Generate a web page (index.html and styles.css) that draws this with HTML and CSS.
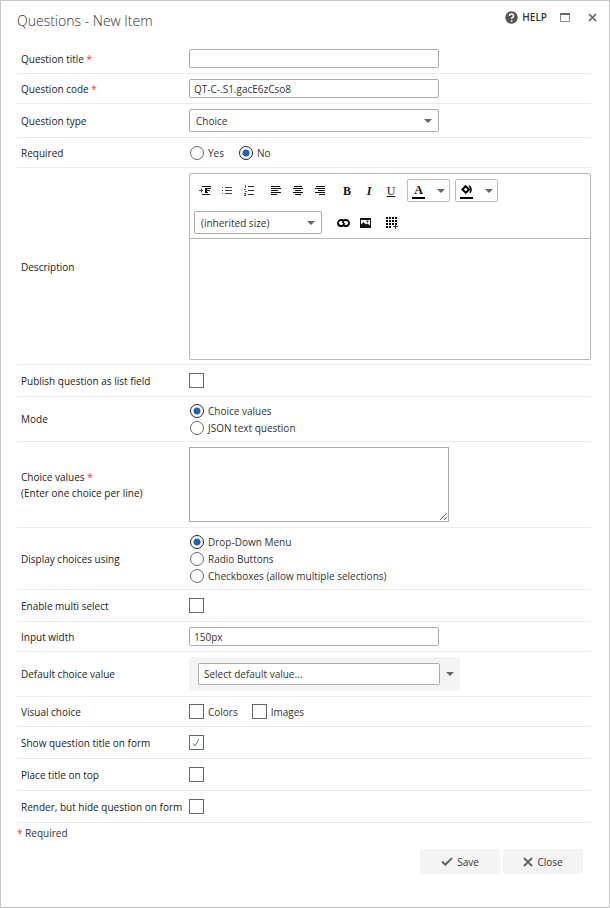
FILE: index.html
```html
<!DOCTYPE html>
<html lang="en">
<head>
    <meta charset="UTF-8">
    <meta name="viewport" content="width=device-width, initial-scale=1.0">
    <title>Questions - New Item</title>
    <link rel="stylesheet" href="styles.css">
</head>
<body>
    <div class="dialog">
        <div class="header">
            <h1>Questions - New Item</h1>
            <div class="header-buttons">
                <button type="button" class="help">
                    <svg width="13" height="13" viewBox="0 0 13 13"><circle cx="6.5" cy="6.5" r="6.2" fill="#555"/><path d="M4.4 5.1C4.4 2.4 8.7 2.5 8.6 5 8.5 6.5 6.6 6.4 6.6 8M6.6 9.2v1.5" fill="none" stroke="#fff" stroke-width="1.5"/></svg>
                    HELP
                </button>
                <button type="button" aria-label="Maximize">
                    <svg width="10" height="9" viewBox="0 0 10 9"><path d="M.5.5h9v8h-9z" fill="none" stroke="#888"/><path d="M0 0h10v2H0z" fill="#666"/></svg>
                </button>
                <button type="button" aria-label="Close dialog">
                    <svg width="9" height="9" viewBox="0 0 9 9"><path d="M1 1l7 7M8 1L1 8" stroke="#666" stroke-width="1.7"/></svg>
                </button>
            </div>
        </div>

        <form>
            <div class="row">
                <label class="name" for="title">Question title <span class="star">*</span></label>
                <div class="field"><input type="text" id="title"></div>
            </div>
            <div class="row">
                <label class="name" for="code">Question code <span class="star">*</span></label>
                <div class="field"><input type="text" id="code" value="QT-C-.S1.gacE6zCso8"></div>
            </div>
            <div class="row">
                <label class="name" for="type">Question type</label>
                <div class="field"><select id="type" class="type"><option>Choice</option></select></div>
            </div>
            <div class="row" role="radiogroup" aria-labelledby="required-name">
                <span class="name" id="required-name">Required</span>
                <div class="field inline">
                    <label class="option"><input type="radio" name="required">Yes</label>
                    <label class="option"><input type="radio" name="required" checked>No</label>
                </div>
            </div>
            <div class="row editor-row">
                <label class="name" for="description">Description</label>
                <div class="field">
                    <div class="editor">
                        <div class="toolbar">
                            <div class="tools">
                                <div class="group">
                                    <button type="button" aria-label="Indent"><svg width="12" height="9" viewBox="0 0 12 9"><path d="M3 .5h9M6 2.5h6M6 4.5h5M6 6.5h3M3 8.5h8" stroke="#111"/><path d="M6 2h2v5H6z" fill="#111"/><path d="M0 4.5h4M2.5 2.5v4" stroke="#444"/></svg></button>
                                    <button type="button" aria-label="Bulleted list"><svg width="10" height="9" viewBox="0 0 10 9"><path d="M3 1.5h7M3 4.5h7M3 7.5h7" stroke="#444"/><path d="M0 1.5h1M0 4.5h1M0 7.5h1" stroke="#444"/></svg></button>
                                    <button type="button" aria-label="Numbered list"><svg width="10" height="11" viewBox="0 0 10 11"><path d="M4 1.5h6M4 5.5h6M4 9.5h6" stroke="#333"/><path d="M1.5 0v3M0 4.5h2M1 6.5h2M0 8.5h2M0 10.5h2M1.5 8v3" stroke="#444" stroke-width=".9"/></svg></button>
                                </div>
                                <div class="group">
                                    <button type="button" aria-label="Align left"><svg width="10" height="9" viewBox="0 0 10 9"><path d="M0 .5h9M0 2.5h10M0 4.5h7M0 6.5h10M0 8.5h6" stroke="#111"/></svg></button>
                                    <button type="button" aria-label="Align center"><svg width="10" height="9" viewBox="0 0 10 9"><path d="M1 .5h8M0 2.5h10M2 4.5h6M0 6.5h10M2 8.5h6" stroke="#111"/></svg></button>
                                    <button type="button" aria-label="Align right"><svg width="10" height="9" viewBox="0 0 10 9"><path d="M1 .5h9M0 2.5h10M3 4.5h7M0 6.5h10M4 8.5h6" stroke="#111"/></svg></button>
                                </div>
                                <div class="group letters">
                                    <button type="button" class="bold">B</button>
                                    <button type="button" class="italic">I</button>
                                    <button type="button" class="underline">U</button>
                                </div>
                                <button type="button" class="color" aria-label="Text color">
                                    <span class="swatch">A</span>
                                    <svg width="8" height="4" viewBox="0 0 8 4"><path d="M0 0h8L4 4z" fill="#666"/></svg>
                                </button>
                                <button type="button" class="color" aria-label="Background color">
                                    <span class="swatch"><svg width="11" height="9" viewBox="0 0 11 9"><path d="M4.5 1.2L1.4 4.5l3.4 3.2 3.3-3.2z" fill="none" stroke="#000" stroke-width="2"/><path d="M8 .8c2.600 1.700 2.600 5 .8 7" fill="none" stroke="#000" stroke-width="1.6"/></svg></span>
                                    <svg width="8" height="4" viewBox="0 0 8 4"><path d="M0 0h8L4 4z" fill="#666"/></svg>
                                </button>
                            </div>
                            <div class="tools">
                                <select class="size" aria-label="Font size"><option>(inherited size)</option></select>
                                <div class="group inserts">
                                    <button type="button" aria-label="Insert link"><svg width="13" height="8" viewBox="0 0 13 8"><path d="M6 1H4a3 3 0 0 0 0 6h1c2 0 2-2 2-3M7 7h2a3 3 0 0 0 0-6H8C6 1 6 3 6 4" fill="none" stroke="#000" stroke-width="1.8"/></svg></button>
                                    <button type="button" aria-label="Insert image"><svg width="11" height="10" viewBox="0 0 11 10"><path d="M0 0h11v10H0z" fill="#111"/><path d="M1 6.5L3.500 4 6 6.5l1.500-1L10 7.500V2H1z" fill="#fff"/><circle cx="7.5" cy="3.5" r="1" fill="#111"/></svg></button>
                                </div>
                                <div class="group">
                                    <button type="button" aria-label="Insert table"><svg width="12" height="12" viewBox="0 0 12 12"><path d="M0 1h11M0 4h11M0 7h11M0 10h6" stroke="#000" stroke-width="2" stroke-dasharray="2 1"/><path d="M7 9.5h5M9.500 7v5" stroke="#333"/></svg></button>
                                </div>
                            </div>
                        </div>
                        <textarea id="description" class="editor-text"></textarea>
                    </div>
                </div>
            </div>
            <div class="row">
                <label class="name" for="publish">Publish question as list field</label>
                <div class="field tick"><input type="checkbox" id="publish"></div>
            </div>
            <div class="row" role="radiogroup" aria-labelledby="mode-name">
                <span class="name" id="mode-name">Mode</span>
                <div class="field">
                    <label class="option"><input type="radio" name="mode" checked>Choice values</label>
                    <label class="option"><input type="radio" name="mode">JSON text question</label>
                </div>
            </div>
            <div class="row">
                <label class="name" for="values">Choice values <span class="star">*</span><br>(Enter one choice per line)</label>
                <div class="field"><textarea id="values" class="values"></textarea></div>
            </div>
            <div class="row" role="radiogroup" aria-labelledby="display-name">
                <span class="name" id="display-name">Display choices using</span>
                <div class="field">
                    <label class="option"><input type="radio" name="display" checked>Drop-Down Menu</label>
                    <label class="option"><input type="radio" name="display">Radio Buttons</label>
                    <label class="option"><input type="radio" name="display">Checkboxes (allow multiple selections)</label>
                </div>
            </div>
            <div class="row">
                <label class="name" for="multi">Enable multi select</label>
                <div class="field tick"><input type="checkbox" id="multi"></div>
            </div>
            <div class="row">
                <label class="name" for="width">Input width</label>
                <div class="field"><input type="text" id="width" value="150px"></div>
            </div>
            <div class="row">
                <label class="name" for="default">Default choice value</label>
                <div class="field">
                    <div class="combo">
                        <input type="text" id="default" value="Select default value...">
                        <button type="button" aria-label="Open list"><svg width="8" height="4" viewBox="0 0 8 4"><path d="M0 0h8L4 4z" fill="#666"/></svg></button>
                    </div>
                </div>
            </div>
            <div class="row" role="group" aria-labelledby="visual-name">
                <span class="name" id="visual-name">Visual choice</span>
                <div class="field inline">
                    <label class="option"><input type="checkbox">Colors</label>
                    <label class="option"><input type="checkbox">Images</label>
                </div>
            </div>
            <div class="row">
                <label class="name" for="show">Show question title on form</label>
                <div class="field tick"><input type="checkbox" id="show" checked></div>
            </div>
            <div class="row">
                <label class="name" for="top">Place title on top</label>
                <div class="field tick"><input type="checkbox" id="top"></div>
            </div>
            <div class="row">
                <label class="name" for="hide">Render, but hide question on form</label>
                <div class="field tick"><input type="checkbox" id="hide"></div>
            </div>

            <p class="note"><span class="star">*</span> Required</p>

            <div class="actions">
                <button type="submit">
                    <svg width="12" height="9" viewBox="0 0 12 9"><path d="M1 4.5l3.300 3.300L11 1" fill="none" stroke="#666" stroke-width="2"/></svg>
                    Save
                </button>
                <button type="button">
                    <svg width="10" height="10" viewBox="0 0 10 10"><path d="M1 1l8 8M9 1L1 9" stroke="#666" stroke-width="2"/></svg>
                    Close
                </button>
            </div>
        </form>
    </div>
</body>
</html>
```
FILE: styles.css
```css
* {
    box-sizing: border-box;
}

body {
    margin: 0;
    background-color: #fff;
    color: #333;
    font-family: "Open Sans", "Noto Sans", sans-serif;
    font-size: 10px;
    line-height: 16px;
}

input, select, textarea, button {
    margin: 0;
    font: inherit;
    color: inherit;
}

button {
    display: inline-flex;
    align-items: center;
    justify-content: center;
    padding: 0;
    border: 0;
    background: none;
    cursor: pointer;
}

.dialog {
    min-height: 100vh;
    padding: 0 18px 16px 16px;
    border: 1px solid #c6c6c6;
}

.header {
    display: flex;
    justify-content: space-between;
    height: 43px;
}

h1 {
    margin: 9px 0 0;
    font-size: 14px;
    font-weight: 300;
    line-height: 22px;
    color: #333;
}

.header-buttons {
    display: flex;
    align-items: center;
    gap: 13px;
    height: 16px;
    margin-top: 8px;
    margin-right: -6px;
}

.header-buttons button:last-child {
    margin-left: 5px;
}

.help {
    gap: 4px;
    font-size: 10px;
    font-weight: 600;
}

/* form rows */

.row {
    display: grid;
    grid-template-columns: 172px 1fr;
    align-items: center;
    padding: 5px 0;
    border-bottom: 1px solid #ececec;
}

.name {
    padding-left: 4px;
    color: #222;
    white-space: nowrap;
}

.star {
    color: #f33;
}

.field {
    min-width: 0;
}

.field > input[type="text"],
.type {
    display: block;
    width: 250px;
    height: 19px;
    padding: 0 4px;
    border: 1px solid #ababab;
    border-radius: 2px;
    background-color: #fff;
}

select {
    appearance: none;
    border: 1px solid #ababab;
    border-radius: 2px;
    background: #fff url("data:image/svg+xml,%3Csvg xmlns='http://www.w3.org/2000/svg' width='8' height='4'%3E%3Cpath d='M0 0h8L4 4z' fill='%23666'/%3E%3C/svg%3E") no-repeat right 6px center;
}

.field > .type {
    height: 23px;
    padding: 0 6px;
}

.inline {
    display: flex;
    align-items: center;
    gap: 14px;
    min-height: 19px;
}

.tick {
    display: flex;
    align-items: center;
    min-height: 21px;
}

.option {
    display: flex;
    align-items: center;
    gap: 4px;
    height: 17px;
}

input[type="radio"],
input[type="checkbox"] {
    appearance: none;
    flex: none;
    width: 15px;
    height: 15px;
    border: 1px solid #666;
    background-color: #fff;
}

input[type="radio"] {
    width: 14px;
    height: 14px;
    margin-left: 1px;
    border-radius: 50%;
}

input[type="radio"]:checked {
    border-color: #222;
    background: radial-gradient(circle, #2561b8 3px, #fff 4px);
}

input[type="checkbox"]:checked {
    background: #fff url("data:image/svg+xml,%3Csvg xmlns='http://www.w3.org/2000/svg' width='9' height='9'%3E%3Cpath d='M1 5.5l2 2.5L7 1' fill='none' stroke='%235a7fa0'/%3E%3C/svg%3E") no-repeat center;
}

/* rich text editor */

.editor-row {
    padding-bottom: 4px;
}

.editor {
    border: 1px solid #b5b5b5;
    border-radius: 2px;
}

.toolbar {
    padding: 5px 4px 4px;
    border-bottom: 1px solid #b5b5b5;
}

.tools {
    display: flex;
    align-items: center;
    gap: 5px;
    height: 23px;
}

.tools + .tools {
    margin-top: 9px;
}

.group {
    display: flex;
}

.group button {
    width: 22px;
    height: 22px;
}

.letters {
    font-family: "Liberation Serif", serif;
    font-size: 12px;
    color: #111;
}

.bold {
    font-weight: bold;
}

.italic {
    font-style: italic;
    font-weight: bold;
}

.underline {
    text-decoration: underline;
}

.color {
    gap: 12px;
    width: 43px;
    height: 23px;
    border: 1px solid #bbb;
    border-radius: 2px;
}

.swatch {
    display: flex;
    align-items: center;
    justify-content: center;
    width: 13px;
    height: 16px;
    border-bottom: 2px solid #000;
    font-family: "Liberation Serif", serif;
    font-size: 12px;
    font-weight: bold;
    color: #111;
}

.size {
    width: 128px;
    height: 23px;
    padding: 0 6px;
}

.inserts {
    margin-left: 5px;
}

.editor-text {
    display: block;
    width: 100%;
    height: 120px;
    padding: 6px;
    border: 0;
    resize: none;
}

.values {
    display: block;
    width: 260px;
    height: 75px;
    padding: 4px;
    border: 1px solid #ababab;
}

.combo {
    display: flex;
    align-items: center;
    width: 271px;
    height: 34px;
    padding-left: 9px;
    border-radius: 2px;
    background-color: #f4f4f4;
}

.combo input {
    width: 242px;
    height: 22px;
    padding: 0 5px;
    border: 1px solid #ababab;
    border-radius: 2px;
    background-color: #fff;
}

.combo button {
    flex: 1;
    height: 22px;
}

.note {
    margin: 2px 0 8px;
}

.actions {
    display: flex;
    justify-content: flex-end;
    gap: 3px;
    padding-right: 8px;
}

.actions button {
    gap: 4px;
    width: 80px;
    height: 25px;
    border-radius: 2px;
    background-color: #f4f4f4;
}
```
